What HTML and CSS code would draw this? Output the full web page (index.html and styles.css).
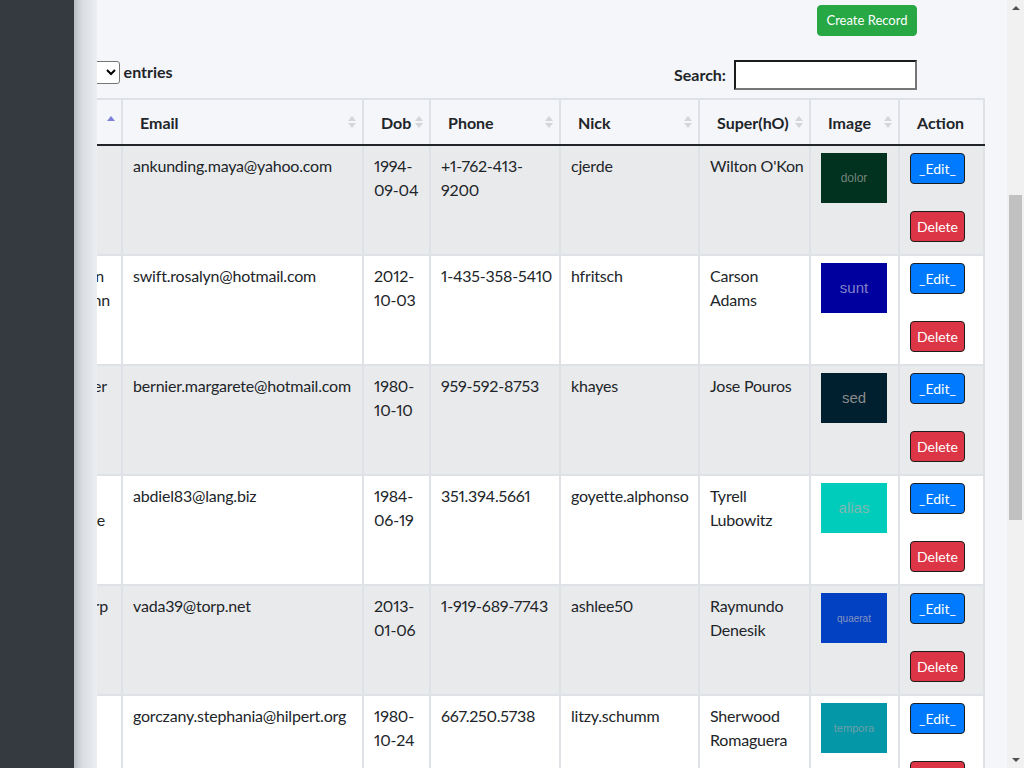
FILE: index.html
```html
<!DOCTYPE html>
<html lang="en">
<head>
<meta charset="utf-8">
<title>Records</title>
<link rel="stylesheet" href="styles.css">
</head>
<body>
<div class="app">
  <aside class="sidebar"></aside>
  <div class="shade"></div>
  <main class="main">
    <div class="inner">
      <div class="toolbar">
        <button class="btn btn-create" type="button">Create Record</button>
      </div>
      <div class="controls">
        <label class="length"><span class="show">Show</span><select class="len-select"><option>10</option></select><span>entries</span></label>
        <label class="search"><span>Search:</span><input class="search-input" type="search"></label>
      </div>
      <table class="grid">
        <colgroup>
          <col class="w0"><col class="w1"><col class="w2"><col class="w3"><col class="w4"><col class="w5"><col class="w6"><col class="w7">
        </colgroup>
        <thead>
          <tr>
            <th>Name<span class="sort active"><i class="up"></i></span></th>
            <th>Email<span class="sort"><i class="up"></i><i class="down"></i></span></th>
            <th>Dob<span class="sort"><i class="up"></i><i class="down"></i></span></th>
            <th>Phone<span class="sort"><i class="up"></i><i class="down"></i></span></th>
            <th>Nick<span class="sort"><i class="up"></i><i class="down"></i></span></th>
            <th>Super(hO)<span class="sort"><i class="up"></i><i class="down"></i></span></th>
            <th>Image<span class="sort"><i class="up"></i><i class="down"></i></span></th>
            <th>Action</th>
          </tr>
        </thead>
        <tbody>
          <tr class="odd">
            <td class="c0"><div class="frag p60">Maya</div></td>
            <td>ankunding.maya@yahoo.com</td>
            <td>1994-09-04</td>
            <td>+1-762-413-9200</td>
            <td>cjerde</td>
            <td class="sup">Wilton O'Kon</td>
            <td class="imgcell"><div class="pic pic-dolor">dolor</div></td>
            <td class="act"><div class="btns"><button class="btn btn-edit" type="button">_Edit_</button><button class="btn btn-del" type="button">Delete</button></div></td>
          </tr>
          <tr>
            <td class="c0"><div class="frag p17">Jordan</div><div class="frag p11">Hermann</div></td>
            <td>swift.rosalyn@hotmail.com</td>
            <td>2012-10-03</td>
            <td>1-435-358-5410</td>
            <td>hfritsch</td>
            <td class="sup">Carson Adams</td>
            <td class="imgcell"><div class="pic pic-sunt">sunt</div></td>
            <td class="act"><div class="btns"><button class="btn btn-edit" type="button">_Edit_</button><button class="btn btn-del" type="button">Delete</button></div></td>
          </tr>
          <tr class="odd">
            <td class="c0"><div class="frag p14">Fisher</div></td>
            <td>bernier.margarete@hotmail.com</td>
            <td>1980-10-10</td>
            <td>959-592-8753</td>
            <td>khayes</td>
            <td class="sup">Jose Pouros</td>
            <td class="imgcell"><div class="pic pic-sed">sed</div></td>
            <td class="act"><div class="btns"><button class="btn btn-edit" type="button">_Edit_</button><button class="btn btn-del" type="button">Delete</button></div></td>
          </tr>
          <tr>
            <td class="c0"><div class="frag p60">Ana</div><div class="frag p16">Blanche</div></td>
            <td>abdiel83@lang.biz</td>
            <td>1984-06-19</td>
            <td>351.394.5661</td>
            <td>goyette.alphonso</td>
            <td class="sup">Tyrell Lubowitz</td>
            <td class="imgcell"><div class="pic pic-alias">alias</div></td>
            <td class="act"><div class="btns"><button class="btn btn-edit" type="button">_Edit_</button><button class="btn btn-del" type="button">Delete</button></div></td>
          </tr>
          <tr class="odd">
            <td class="c0"><div class="frag p13">Thorp</div></td>
            <td>vada39@torp.net</td>
            <td>2013-01-06</td>
            <td>1-919-689-7743</td>
            <td>ashlee50</td>
            <td class="sup">Raymundo Denesik</td>
            <td class="imgcell"><div class="pic pic-quaerat">quaerat</div></td>
            <td class="act"><div class="btns"><button class="btn btn-edit" type="button">_Edit_</button><button class="btn btn-del" type="button">Delete</button></div></td>
          </tr>
          <tr>
            <td class="c0"><div class="frag p60">Gladys</div></td>
            <td>gorczany.stephania@hilpert.org</td>
            <td>1980-10-24</td>
            <td>667.250.5738</td>
            <td>litzy.schumm</td>
            <td class="sup">Sherwood Romaguera</td>
            <td class="imgcell"><div class="pic pic-tempora">tempora</div></td>
            <td class="act"><div class="btns"><button class="btn btn-edit" type="button">_Edit_</button><button class="btn btn-del" type="button">Delete</button></div></td>
          </tr>
        </tbody>
      </table>
    </div>
  </main>
  <div class="vscroll">
    <div class="arrow arrow-up"></div>
    <div class="thumb"></div>
    <div class="arrow arrow-down"></div>
  </div>
</div>
</body>
</html>
```
FILE: styles.css
```css
* { box-sizing: border-box; }
html, body { margin: 0; height: 100%; }
body {
  font-family: "Lato", "Liberation Sans", sans-serif;
  font-size: 16px;
  line-height: 1.5;
  color: #212529;
  background: #f4f6f9;
  overflow: hidden;
}
.app { display: flex; height: 768px; }
.sidebar { width: 74px; flex: none; background: #343a40; }
.shade {
  width: 23px; flex: none;
  background: linear-gradient(to right, #b9bcc1 0%, #d9dce0 35%, #eceef2 100%);
}
.main {
  flex: 1; min-width: 0; overflow: hidden;
  padding: 5px 90px 0 0;
}
.inner { margin-left: -101px; }

.toolbar { display: flex; justify-content: flex-end; }
.btn {
  font-family: "Lato", "Liberation Sans", sans-serif;
  font-size: 14px; line-height: 21px;
  color: #fff; border-radius: 4px; cursor: pointer;
}
.btn-create {
  width: 100px; height: 31px; padding: 0;
  font-size: 13px; text-align: center;
  background: #28a745; border: 1px solid #28a745;
}

.controls {
  display: flex; justify-content: space-between; align-items: flex-start;
  margin-top: 24px;
}
.length {
  display: flex; align-items: center; gap: 4px;
  font-weight: 700; margin-top: 0;
}
.len-select {
  width: 80px; height: 23px;
  font-size: 13px; border: 1px solid #767676; border-radius: 3px;
  background: #fff;
}
.search { display: flex; align-items: center; gap: 8px; font-weight: 700; }
.search-input {
  width: 183px; height: 30px;
  border: 2px solid; border-color: #1b1b1b #767676 #767676 #1b1b1b;
  background: #fff; padding: 2px 4px;
}

.grid {
  margin-top: 8px;
  border-collapse: collapse;
  table-layout: fixed;
  width: 987px;
}
.w0 { width: 125px; }
.w1 { width: 241px; }
.w2 { width: 67px; }
.w3 { width: 130px; }
.w4 { width: 139px; }
.w5 { width: 111px; }
.w6 { width: 89px; }
.w7 { width: 85px; }

.grid th, .grid td { border: 2px solid #dee2e6; }
.grid th {
  position: relative;
  text-align: left; font-weight: 700;
  padding: 11px 18px 9px 17px;
  border-bottom: 2px solid #212529;
  white-space: nowrap;
}
.grid td {
  vertical-align: top;
  padding: 8px 0 12px 10px;
  background: #fff;
  letter-spacing: -0.2px;
  font-variant-numeric: proportional-nums;
}
.grid td.sup { padding-right: 4px; }
.grid tr.odd td { background: #e9eaec; }

.sort {
  position: absolute; right: 6px; top: 50%;
  margin-top: -6px;
  display: flex; flex-direction: column; gap: 2px;
}
.sort i { display: block; width: 0; height: 0; border-left: 4px solid transparent; border-right: 4px solid transparent; }
.sort .up { border-bottom: 5px solid #d3d5d9; }
.sort .down { border-top: 5px solid #d3d5d9; }
.sort.active .up { border-bottom-color: #7d80d8; }

.grid td.c0 { padding: 8px 0 12px; }
.frag { text-align: right; white-space: nowrap; }
.p11 { padding-right: 11px; }
.p13 { padding-right: 13px; }
.p14 { padding-right: 14px; }
.p16 { padding-right: 16px; }
.p17 { padding-right: 17px; }
.p60 { padding-right: 60px; }

.grid td.imgcell { padding: 7px 10px; }
.pic {
  width: 66px; height: 50px;
  display: flex; align-items: center; justify-content: center;
  font-family: "Liberation Sans", Arial, sans-serif;
  letter-spacing: 0;
  color: #8a8a8a;
}
.pic-dolor { background: #01311f; font-size: 12px; color: #74847b; }
.pic-sunt { background: #00009e; font-size: 15px; color: #8383c9; }
.pic-sed { background: #01202f; font-size: 15px; }
.pic-alias { background: #00ccbb; font-size: 15px; color: #7db9b2; }
.pic-quaerat { background: #0341c3; font-size: 10px; color: #8494bd; }
.pic-tempora { background: #0397a8; font-size: 11px; color: #6f9fa6; }

.grid td.act { padding: 7px 10px 12px; }
.btns { display: flex; flex-direction: column; align-items: flex-start; gap: 27px; }
.btn-edit, .btn-del {
  width: 55px; height: 31px; padding: 0;
  border: 1px solid #1d1d1d;
  text-align: center; letter-spacing: 0;
}
.btn-edit { background: #007bff; }
.btn-del { background: #dc3545; }

.vscroll {
  width: 17px; flex: none; background: #f1f1f1;
  display: flex; flex-direction: column; align-items: center;
}
.arrow { width: 0; height: 0; border-left: 4px solid transparent; border-right: 4px solid transparent; }
.arrow-up { margin-top: 6px; border-bottom: 4px solid #505050; }
.arrow-down { margin-top: auto; margin-bottom: 6px; border-top: 4px solid #505050; }
.thumb { width: 13px; height: 325px; margin-top: 185px; background: #c1c1c1; }
```
